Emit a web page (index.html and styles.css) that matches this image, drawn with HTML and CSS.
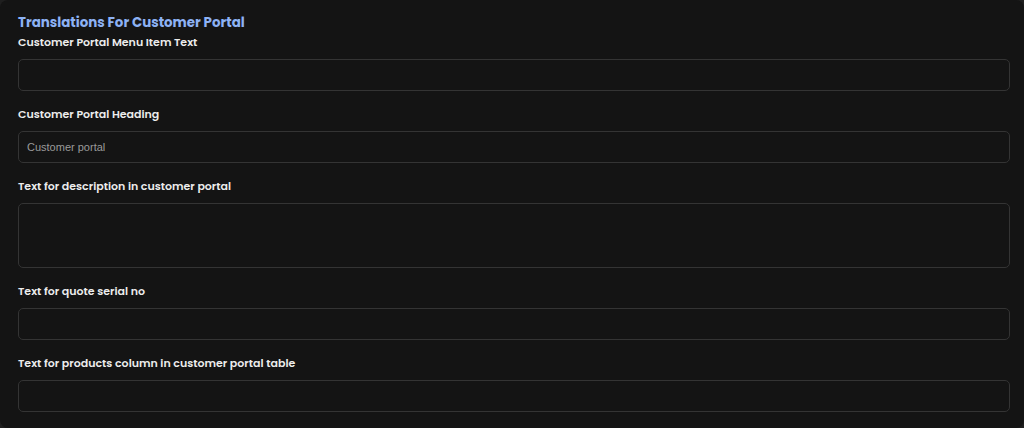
FILE: index.html
```html
<!DOCTYPE html>
<html>
<head>
    <title>Customer Portal Translations</title>
    <link rel="stylesheet" href="styles.css">
</head>
<body>
    <div class="panel">
        <h2 class="section-title">Translations For Customer Portal</h2>
        <form class="translations-form">
            <div class="field">
                <label for="menu-item">Customer Portal Menu Item Text</label>
                <input type="text" id="menu-item" name="menu_item">
            </div>
            <div class="field">
                <label for="heading">Customer Portal Heading</label>
                <input type="text" id="heading" name="heading" value="Customer portal">
            </div>
            <div class="field">
                <label for="description">Text for description in customer portal</label>
                <textarea id="description" name="description"></textarea>
            </div>
            <div class="field">
                <label for="serial-no">Text for quote serial no</label>
                <input type="text" id="serial-no" name="serial_no">
            </div>
            <div class="field">
                <label for="products-col">Text for products column in customer portal table</label>
                <input type="text" id="products-col" name="products_col">
            </div>
        </form>
    </div>
</body>
</html>
```

FILE: styles.css
```css
html, body {
    height: 100%;
}

body {
    margin: 0;
    background-color: #1f1f1f;
    font-family: Poppins, "Open Sans", "Liberation Sans", sans-serif;
    overflow: hidden;
}

.panel {
    background-color: #141414;
    border-radius: 8px;
    min-height: 100%;
    padding: 13px 14px 0 18px;
    box-sizing: border-box;
}

.section-title {
    margin: 0 0 1px 0;
    font-size: 13.4px;
    line-height: 20px;
    font-weight: 700;
    color: #8db2f4;
}

.field {
    margin-bottom: 15px;
}

label {
    display: block;
    font-size: 11px;
    line-height: 16px;
    font-weight: 600;
    color: #ececec;
    margin-bottom: 9px;
}

input[type="text"],
textarea {
    display: block;
    width: 100%;
    box-sizing: border-box;
    height: 32px;
    padding: 0 8px;
    background-color: #141414;
    border: 1px solid #343434;
    border-radius: 5px;
    color: #9a9a9a;
    font-family: "Liberation Sans", Arial, sans-serif;
    font-size: 11px;
    outline: none;
}

textarea {
    height: 65px;
    resize: none;
    padding: 8px;
}
```
